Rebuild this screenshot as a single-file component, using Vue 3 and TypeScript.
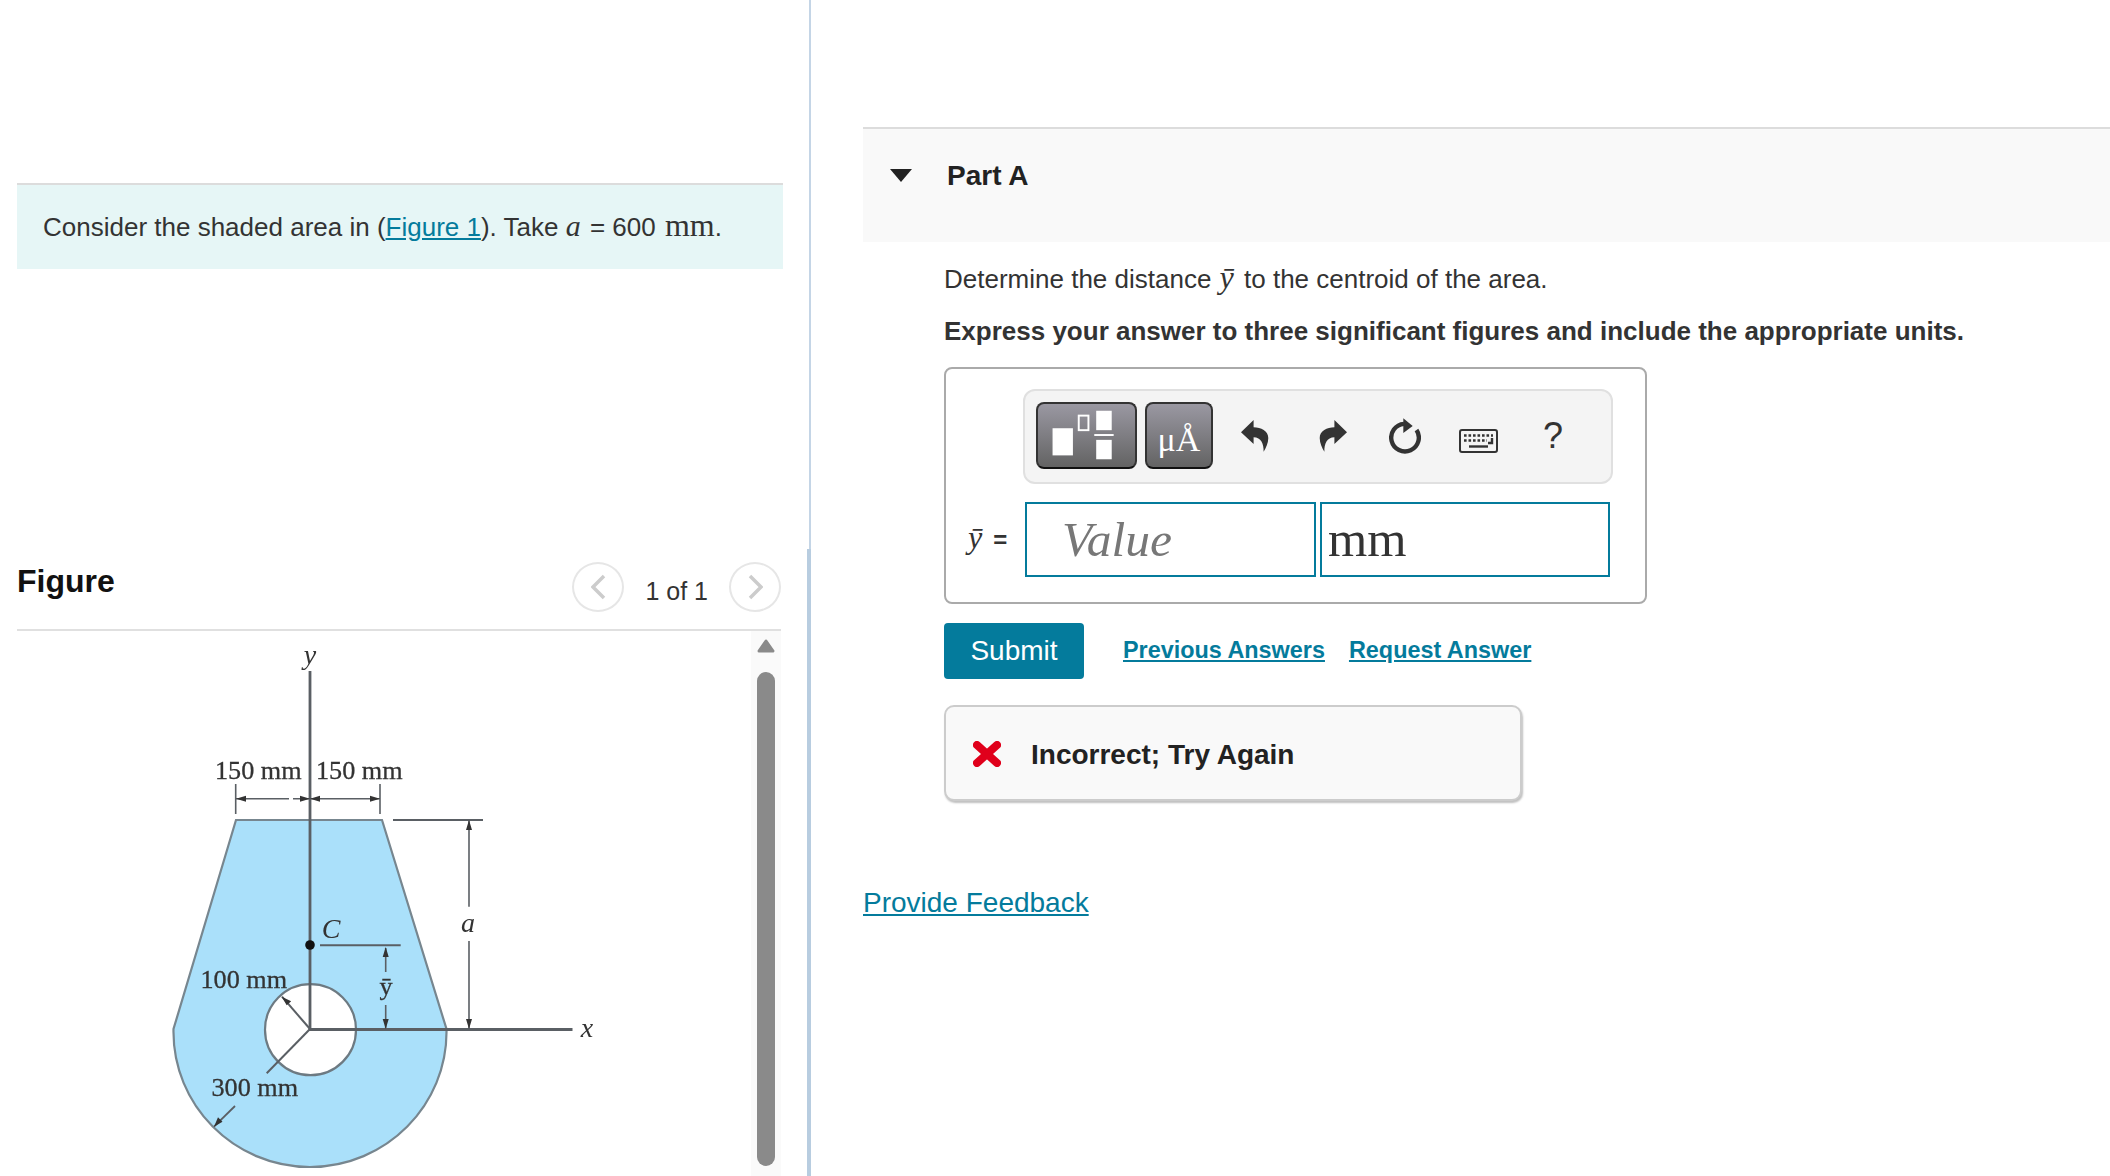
<template>
  <div class="page">
    <div class="left">
      <div class="intro">
        <p>
          Consider the shaded area in (<a href="#">Figure 1</a>). Take
          <i class="math math-a">a</i> = 600 <span class="math math-mm">mm</span>.
        </p>
      </div>

      <div class="figure-head">
        <h2>Figure</h2>
        <div class="pager">
          <button class="circle" aria-label="Previous">
            <svg width="15" height="26" viewBox="0 0 15 26"><path d="M13 2 L2 13 L13 24" /></svg>
          </button>
          <span class="count">1 of 1</span>
          <button class="circle" aria-label="Next">
            <svg width="15" height="26" viewBox="0 0 15 26"><path d="M2 2 L13 13 L2 24" /></svg>
          </button>
        </div>
      </div>

      <div class="figure-body">
        <svg class="diagram" width="734" height="545" viewBox="17 631 734 545">
          <path
            d="M236 820 L382 820 L446.5 1029 C448 1105 386 1167 310 1167 C234 1167 172 1105 173.5 1029 Z"
            fill="#aae0fa"
            stroke="#77868f"
            stroke-width="2.2"
          />
          <circle cx="310.5" cy="1029.7" r="45.5" fill="#fff" stroke="#6d7a82" stroke-width="2.2" />

          <g stroke="#5a5f64" fill="none" stroke-width="2">
            <path d="M310 671 V1029.5 H572.5" stroke-width="2.8" />
            <path d="M393 820 H483" />
            <path d="M235.7 784 V814 M380 784 V814" stroke-width="1.6" />
            <path d="M236 798.7 H289 M293 798.7 H380" stroke-width="1.6" />
            <path d="M469 820 V906.7 M469 941 V1029" stroke-width="1.6" />
            <path d="M320 945.3 H400.7" />
            <path d="M385.7 948 V972 M385.7 1005 V1029" stroke-width="1.6" />
            <path d="M310 1029 L282 996.7" stroke-width="2" />
            <path d="M310 1029 L266.7 1073.3" stroke-width="2" />
            <path d="M235 1106 L214 1126.7" stroke-width="1.8" />
          </g>

          <g fill="#333">
            <path d="M236 798.7 l10 -3 v6 Z M380 798.7 l-10 -3 v6 Z" />
            <path d="M310 798.7 l-10 -3 v6 Z M310 798.7 l10 -3 v6 Z" />
            <path d="M469 820 l-3 10 h6 Z M469 1029 l-3 -10 h6 Z" />
            <path d="M385.7 947 l-3 10 h6 Z M385.7 1029 l-3 -10 h6 Z" />
            <path d="M281.7 996.7 l9.5 4.5 l-4.5 4 Z M214 1126.7 l4 -9.5 l4.5 4.5 Z" />
            <circle cx="310" cy="945" r="4.8" fill="#111" />
          </g>

          <g class="labels">
            <text x="215" y="778.5">150 mm</text>
            <text x="316" y="778.5">150 mm</text>
            <text x="200.5" y="987.5">100 mm</text>
            <text x="211.5" y="1096">300 mm</text>
            <text x="386" y="995" text-anchor="middle">ȳ</text>
            <text class="it" x="310" y="664" text-anchor="middle">y</text>
            <text class="it" x="587" y="1036.5" text-anchor="middle">x</text>
            <text class="it" x="468" y="931.5" text-anchor="middle">a</text>
            <text class="it" x="331" y="938" text-anchor="middle">C</text>
          </g>
        </svg>

        <div class="scrollbar">
          <svg class="scroll-up" width="18" height="14" viewBox="0 0 18 14">
            <path d="M9 2 L16 12 H2 Z" />
          </svg>
          <span class="scroll-thumb"></span>
        </div>
      </div>
    </div>

    <div class="divider">
      <span class="divider-top"></span>
      <span class="divider-bottom"></span>
    </div>

    <div class="right">
      <div class="part-head">
        <span class="caret"></span>
        <h3>{{ partTitle }}</h3>
      </div>

      <div class="part-body">
        <p class="prompt">Determine the distance <i class="math math-y">ȳ</i> to the centroid of the area.</p>
        <p class="prompt strong">Express your answer to three significant figures and include the appropriate units.</p>

        <div class="answer">
          <div class="toolbar">
            <button class="tool tool-wide" aria-label="Templates">
              <svg width="100" height="67" viewBox="0 0 100 67">
                <rect x="15" y="26" width="21" height="28" fill="#fff" />
                <rect x="42" y="13" width="10" height="15" fill="none" stroke="#fff" stroke-width="2" />
                <rect x="60" y="8" width="16" height="20" fill="#fff" />
                <rect x="58" y="32" width="20" height="2" fill="#fff" />
                <rect x="60" y="38" width="16" height="20" fill="#fff" />
              </svg>
            </button>
            <button class="tool tool-units">μÅ</button>

            <svg class="icon undo" width="28" height="32" viewBox="0 0 28 32">
              <path :d="arrowPath" />
            </svg>
            <svg class="icon redo" width="28" height="32" viewBox="0 0 28 32">
              <path :d="arrowPath" transform="translate(28 0) scale(-1 1)" />
            </svg>
            <svg class="icon reset" width="32" height="36" viewBox="0 0 32 36">
              <path d="M15 5.9 A13.8 13.8 0 1 0 27.5 12" fill="none" stroke="#333" stroke-width="4.4" />
              <path d="M14.3 0.3 L23.7 8 L14.3 15 Z" fill="#333" />
            </svg>
            <svg class="icon keyboard" width="39" height="24" viewBox="0 0 39 24">
              <rect x="1" y="1" width="37" height="22" rx="2" fill="none" stroke="#333" stroke-width="2" />
              <path d="M5 6.5 H34" stroke="#333" stroke-width="2.4" stroke-dasharray="2.6 1.9" />
              <path d="M5 11.5 H28" stroke="#333" stroke-width="2.4" stroke-dasharray="2.6 1.9" />
              <path d="M10 17.5 H29" stroke="#333" stroke-width="2.4" />
              <path d="M33 9 V14 H29" fill="none" stroke="#333" stroke-width="2.4" />
            </svg>
            <span class="help">?</span>
          </div>

          <div class="answer-row">
            <span class="var"><i class="math">ȳ</i><b>=</b></span>
            <div class="field value">Value</div>
            <div class="field unit">mm</div>
          </div>
        </div>

        <div class="actions">
          <button class="submit">Submit</button>
          <a href="#" class="action-link first">Previous Answers</a>
          <a href="#" class="action-link">Request Answer</a>
        </div>

        <div class="feedback">
          <svg width="28" height="26" viewBox="0 0 28 26">
            <path d="M4 4 L24 22 M24 4 L4 22" stroke="#e0001b" stroke-width="8" stroke-linecap="round" />
          </svg>
          <span>Incorrect; Try Again</span>
        </div>
      </div>

      <a href="#" class="provide">Provide Feedback</a>
    </div>
  </div>
</template>

<script setup lang="ts">
const partTitle = 'Part A';

// undo arrow, mirrored for redo
const arrowPath =
  'M0 12.3 L12.6 0 V7.3 C20 7.3 27.3 11 27.3 18 C27.3 23 25 28 22.6 31.7 C23 24 20 17.3 12.6 17.3 V24 Z';
</script>

<style>
html,
body {
  margin: 0;
  background: #fff;
}
</style>

<style scoped>
.page {
  display: flex;
  width: 2110px;
  height: 1176px;
  overflow: hidden;
  font-family: "Liberation Sans", Arial, sans-serif;
  font-size: 26px;
  line-height: 36px;
  color: #333;
}

a {
  color: #047b9c;
}

.math {
  font-family: "Liberation Serif", serif;
  line-height: 1;
}

.math-a {
  font-size: 30px;
  margin-right: 2px;
}

.math-mm {
  font-size: 32px;
  margin-left: 2px;
}

.math-y {
  font-size: 32px;
  margin: 0 3px 0 1px;
}

/* left column */
.left {
  width: 807px;
  flex: none;
  box-sizing: border-box;
  padding: 183px 0 0 17px;
}

.intro {
  width: 766px;
  height: 86px;
  box-sizing: border-box;
  border-top: 2px solid #dcdcdc;
  background: #e6f6f6;
  padding-left: 26px;
  display: flex;
  align-items: center;
}

.intro p {
  margin: 0;
}

.figure-head {
  width: 764px;
  height: 69px;
  box-sizing: border-box;
  margin-top: 293px;
  border-bottom: 2px solid #e0e0e0;
  display: flex;
  justify-content: space-between;
  align-items: flex-start;
}

.figure-head h2 {
  margin: 0;
  font-size: 32px;
  line-height: 38px;
  color: #111;
}

.pager {
  display: flex;
  align-items: flex-start;
  gap: 21px;
}

.count {
  margin-top: 11px;
  font-size: 25px;
}

.circle {
  width: 52px;
  height: 50px;
  box-sizing: border-box;
  padding: 0;
  border: 2px solid #e6e6e6;
  border-radius: 50%;
  background: #fff;
  display: flex;
  align-items: center;
  justify-content: center;
}

.circle path {
  fill: none;
  stroke: #ccc;
  stroke-width: 3.5;
}

.figure-body {
  width: 764px;
  height: 545px;
  display: flex;
}

.diagram {
  display: block;
  flex: none;
  filter: blur(0.6px);
}

.labels text {
  font-family: "Liberation Serif", serif;
  font-size: 26.2px;
  fill: #333;
  stroke: #333;
  stroke-width: 0.3;
}

.labels .it {
  font-style: italic;
  font-size: 28px;
  stroke-width: 0;
}

.scrollbar {
  width: 30px;
  background: #fafafa;
  display: flex;
  flex-direction: column;
  align-items: center;
  padding-top: 8px;
  box-sizing: border-box;
}

.scroll-up {
  display: block;
}

.scroll-up path {
  fill: #8a8a8a;
  stroke: #8a8a8a;
  stroke-width: 3;
  stroke-linejoin: round;
}

.scroll-thumb {
  width: 18px;
  height: 494px;
  margin-top: 19px;
  border-radius: 9px;
  background: #8a8a8a;
}

/* column divider */
.divider {
  width: 5px;
  flex: none;
  display: flex;
  flex-direction: column;
  align-items: flex-end;
}

.divider-top {
  width: 2px;
  height: 549px;
  margin-right: 1px;
  background: #c4d5e6;
}

.divider-bottom {
  width: 4px;
  flex: 1;
  margin-right: 1px;
  background: #b8cde0;
}

/* right column */
.right {
  flex: 1;
  padding: 127px 0 0 51px;
}

.part-head {
  height: 115px;
  box-sizing: border-box;
  border-top: 2px solid #dcdcdc;
  background: #f9f9f9;
  padding: 29px 0 0 27px;
  display: flex;
  align-items: flex-start;
}

.caret {
  width: 0;
  height: 0;
  margin-top: 11px;
  border-left: 11px solid transparent;
  border-right: 11px solid transparent;
  border-top: 13px solid #222;
}

.part-head h3 {
  margin: 0 0 0 35px;
  font-size: 28px;
  line-height: 36px;
  color: #222;
}

.part-body {
  padding: 19px 0 0 81px;
}

.prompt {
  margin: 0 0 16px;
}

.strong {
  font-weight: bold;
  margin-bottom: 18px;
}

.answer {
  width: 703px;
  height: 237px;
  box-sizing: border-box;
  border: 2px solid #aaa;
  border-radius: 8px;
  padding: 20px 0 0 77px;
}

.toolbar {
  width: 590px;
  height: 95px;
  box-sizing: border-box;
  border: 2px solid #e0e0e0;
  border-radius: 12px;
  background: #f4f4f4;
  padding: 11px 0 0 11px;
  display: flex;
  align-items: flex-start;
  position: relative;
}

.tool {
  height: 67px;
  box-sizing: border-box;
  padding: 0;
  border: 2px solid #333;
  border-bottom-color: #111;
  border-radius: 8px;
  background: linear-gradient(#9a98a2, #636363);
  color: #fff;
  display: flex;
  align-items: center;
  justify-content: center;
}

.tool-wide {
  width: 101px;
}

.tool-units {
  width: 68px;
  margin-left: 8px;
  font-family: "Liberation Serif", serif;
  font-size: 34px;
  padding-top: 8px;
}

.icon {
  position: absolute;
  fill: #333;
}

.undo {
  left: 216px;
  top: 29px;
}

.redo {
  left: 294px;
  top: 29px;
}

.reset {
  left: 364px;
  top: 27px;
}

.keyboard {
  left: 434px;
  top: 38px;
}

.help {
  position: absolute;
  left: 518px;
  top: 25px;
  font-size: 36px;
  line-height: 40px;
}

.answer-row {
  display: flex;
  align-items: flex-start;
  margin: 18px 0 0 -55px;
}

.var {
  width: 57px;
  padding-top: 19px;
  display: flex;
  align-items: baseline;
  gap: 11px;
  font-size: 24px;
}

.var .math {
  font-size: 32px;
}

.field {
  height: 75px;
  box-sizing: border-box;
  border: 2px solid #047b9c;
  font-family: "Liberation Serif", serif;
  line-height: 71px;
}

.value {
  width: 291px;
  padding-left: 35px;
  font-size: 49.5px;
  font-style: italic;
  color: #777;
}

.unit {
  width: 290px;
  margin-left: 4px;
  padding-left: 6px;
  font-size: 50.5px;
}

.actions {
  margin-top: 19px;
  display: flex;
  align-items: center;
}

.submit {
  width: 140px;
  height: 56px;
  padding: 0;
  border: none;
  border-radius: 4px;
  background: #047b9c;
  color: #fff;
  font-family: inherit;
  font-size: 28px;
}

.action-link {
  margin-left: 24px;
  margin-bottom: 2px;
  font-size: 23.4px;
  font-weight: bold;
}

.action-link.first {
  margin-left: 39px;
}

.feedback {
  width: 578px;
  height: 96px;
  box-sizing: border-box;
  margin-top: 26px;
  border: 2px solid #ccc;
  border-radius: 10px;
  background: #f9f9f9;
  box-shadow: 1px 2px 2px rgba(0, 0, 0, 0.25);
  padding: 4px 0 0 27px;
  display: flex;
  align-items: center;
  gap: 30px;
  font-size: 28px;
  font-weight: bold;
  color: #222;
}

.feedback svg {
  margin-top: -2px;
}

.provide {
  display: inline-block;
  margin-top: 84px;
  font-size: 28px;
}
</style>
